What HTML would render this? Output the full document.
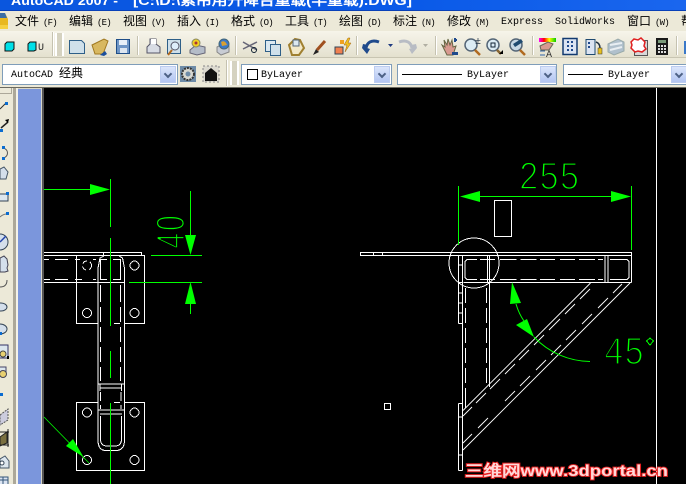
<!DOCTYPE html>
<html><head><meta charset="utf-8"><style>
html,body{margin:0;padding:0}
body{width:686px;height:484px;overflow:hidden;position:relative;background:#ece9d8;font-family:"Liberation Mono","WenQuanYi Zen Hei",monospace}
.a{position:absolute}
.m{position:absolute;top:13px;font:12px/16px "WenQuanYi Zen Hei","Noto Sans CJK SC",sans-serif;color:#000;white-space:nowrap}
.m i{font:normal 9px/16px "Liberation Mono",monospace;margin-left:4px;letter-spacing:-.8px}
.e{position:absolute;top:15px;font:10px/16px "Liberation Mono",monospace;white-space:nowrap}
.c{position:absolute;top:64px;height:19px;background:#fff;border:1px solid #7f9db9;box-sizing:content-box}
.b{position:absolute;top:66px;width:16px;height:17px;background:linear-gradient(#dbe5fb,#b2c5f2);border:1px solid #bcccf0;box-sizing:border-box}
.b:after{content:"";position:absolute;left:4px;top:4px;width:4px;height:4px;border-right:2px solid #4d6185;border-bottom:2px solid #4d6185;transform:rotate(45deg)}
.t{position:absolute;top:69px;font:10px/14px "Liberation Mono",monospace;color:#000;white-space:nowrap}
.g{position:absolute;width:1px;background:#c5c2b0;border-right:1px solid #fff}
.h{position:absolute;width:5px;border-left:2px solid #fff;border-right:2px solid #fff;background:#d5d2c0;box-sizing:content-box}
</style></head><body>
<div class="a" style="left:0;top:0;width:686px;height:10px;background:linear-gradient(90deg,#0a56de,#0a5ae8 60%,#1a66ee);border-bottom:1px solid #0840b8;overflow:hidden"></div>
<svg class="a" style="left:0;top:0" width="686" height="10" font-family="'Liberation Sans','WenQuanYi Zen Hei',sans-serif" font-weight="bold" font-size="13" fill="#fff">
<text x="11" y="5" textLength="107" lengthAdjust="spacingAndGlyphs">AutoCAD 2007 -</text>
<text x="133" y="5" textLength="279" lengthAdjust="spacingAndGlyphs">[C:\D:\索吊用升降台重载(半重载).DWG]</text>
</svg>
<div class="a" style="left:0;top:11px;width:686px;height:20px;background:#ece9d8"></div>
<div class="a" style="left:0;top:31px;width:686px;height:26px;background:linear-gradient(#f6f4ea,#e4e1cf)"></div>
<div class="a" style="left:0;top:57px;width:686px;height:1px;background:#c8c5b2"></div>
<div class="a" style="left:0;top:58px;width:686px;height:29px;background:#ece9d8"></div>

<svg class="a" style="left:0;top:11px" width="10" height="20"><path d="M0 2h5l3 6v10H0z" fill="#e8b820"/><path d="M0 2h5l2 5H0z" fill="#3a6ea5"/><path d="M0 14h8v4H0z" fill="#f5d040"/></svg>
<div class="m" style="left:15px">文件<i>(F)</i></div>
<div class="m" style="left:69px">编辑<i>(E)</i></div>
<div class="m" style="left:123px">视图<i>(V)</i></div>
<div class="m" style="left:177px">插入<i>(I)</i></div>
<div class="m" style="left:231px">格式<i>(O)</i></div>
<div class="m" style="left:285px">工具<i>(T)</i></div>
<div class="m" style="left:339px">绘图<i>(D)</i></div>
<div class="m" style="left:393px">标注<i>(N)</i></div>
<div class="m" style="left:447px">修改<i>(M)</i></div>
<div class="e" style="left:501px">Express</div>
<div class="e" style="left:555px">SolidWorks</div>
<div class="m" style="left:627px">窗口<i>(W)</i></div>
<div class="m" style="left:681px">帮</div>

<div class="g" style="left:52px;top:32px;height:24px"></div>
<div class="h" style="left:55px;top:33px;height:23px"></div>
<div class="g" style="left:137px;top:36px;height:19px"></div>
<div class="g" style="left:235px;top:36px;height:19px"></div>
<div class="g" style="left:356px;top:36px;height:19px"></div>
<div class="g" style="left:435px;top:36px;height:19px"></div>
<div class="g" style="left:532px;top:36px;height:19px"></div>
<div class="g" style="left:676px;top:36px;height:19px"></div>
<div class="g" style="left:226px;top:60px;height:26px"></div>
<div class="h" style="left:230px;top:61px;height:24px"></div>

<svg class="a" style="left:0;top:31px" width="686" height="27" stroke-width="1">
<defs><linearGradient id="r"><stop offset="0" stop-color="#f0f"/><stop offset=".3" stop-color="#f00"/><stop offset=".6" stop-color="#ff0"/><stop offset="1" stop-color="#0c0"/></linearGradient></defs>
<path d="M5 13l2-2h7v7l-2 2H5z" fill="#00e0e8" stroke="#111"/><path d="M28 13l2-2h6v8l-2 1h-6z" fill="#00e0e8" stroke="#111"/>
<text x="38" y="19" font-family="Liberation Mono" font-size="10" fill="#222">U</text>
<path d="M69.500 9.500h12l3 3v10h-15z" fill="#cfe0ea" stroke="#2e5f88"/>
<path d="M92 14l12-6 4 2-5 13H95z" fill="#d8b860" stroke="#a07820"/><path d="M100 24l5-4 2 3-3 2z" fill="#1c4f9c"/>
<rect x="116.500" y="8.500" width="13" height="14" fill="#6f96c6" stroke="#1f4e88"/><rect x="119" y="9" width="8" height="5" fill="#e8f0f8"/><rect x="120" y="17" width="7" height="5" fill="#dde6f0"/>
<path d="M147 16l3-3V8h6v5l4 3v6h-13z" fill="#d8dce4" stroke="#556"/><rect x="151" y="8" width="5" height="5" fill="#fff"/>
<rect x="167.500" y="8.500" width="13" height="14" fill="#cfe0ea" stroke="#2e5f88"/><circle cx="175" cy="15" r="4" fill="#dfeefa" stroke="#556"/><path d="M172 19l-4 5" stroke="#b06a20" stroke-width="2"/>
<path d="M190 19l6-5 9 2v6l-8 2-7-2z" fill="#b4bcc8" stroke="#667"/><circle cx="196" cy="12" r="4" fill="#f0d020" stroke="#886"/><circle cx="196" cy="12" r="1.500" fill="#a33"/>
<path d="M217 16l6-3 6 2v6l-8 3-4-3z" fill="#c8ccd4" stroke="#888"/><circle cx="224" cy="13" r="5" fill="#3a78c8" stroke="#467"/><path d="M221 11c3-2 5 0 6 3l-5 1z" fill="#d8a030"/>
<path d="M243 11l14 8M243 18l14-7" stroke="#667" stroke-width="1.500"/><circle cx="254" cy="19" r="2.500" fill="none" stroke="#123"/>
<rect x="265.500" y="9.500" width="10" height="11" fill="#dbe8f0" stroke="#2e5f88"/><rect x="270.500" y="13.500" width="10" height="11" fill="#cfe0ea" stroke="#2e5f88"/>
<path d="M289 14l6-6 5 1 4 8-5 7h-7z" fill="#f2e8c8" stroke="#a08030" stroke-width="2"/><rect x="293" y="9" width="6" height="6" fill="#dce8f0" stroke="#567"/>
<path d="M313 24l3-6 3 3z" fill="#222"/><path d="M317 19l8-9" stroke="#a05020" stroke-width="3"/>
<rect x="335" y="16" width="8" height="7" fill="#f08050" stroke="#345"/><rect x="340" y="9" width="4" height="4" fill="#f0a020"/><path d="M348 7l-4 7h3l-2 7 6-9h-3l2-5z" fill="#f0c020" stroke="#a06010" stroke-width=".5"/>
<path d="M379 11c-8-3-12 1-13 6" fill="none" stroke="#1f4a8c" stroke-width="3"/><path d="M363 13l5 1-1 3 3 1-3 5-5-6z" fill="#1f4a8c"/><path d="M388 13h5l-2.500 3z" fill="#1f3a80"/>
<path d="M399 11c8-3 12 1 13 6" fill="none" stroke="#b8bcc4" stroke-width="3"/><path d="M416 13l-5 1 1 3-3 1 3 5 5-6z" fill="#b8bcc4"/><path d="M423 13h5l-2.500 3z" fill="#b0aea2"/>
<path d="M442 14l3 2-1-7 3 5 1-6 2 6 2-5 1 7 3-1-3 9h-6z" fill="#d89a90" stroke="#664"/><path d="M454 9h3M455 7v4" stroke="#1f4a8c" stroke-width="2"/><path d="M452 21h6v3h-6z" fill="#1f4a8c"/>
<circle cx="471" cy="14" r="6" fill="#dcecf4" stroke="#567" stroke-width="1.500"/><path d="M475 19l5 5" stroke="#b06a20" stroke-width="2.500"/><text x="475" y="13" font-size="10" font-family="Liberation Mono" fill="#234">±</text>
<circle cx="493" cy="14" r="6" fill="#dcecf4" stroke="#567" stroke-width="1.500"/><rect x="491" y="12" width="4" height="4" fill="none" stroke="#123"/><path d="M497 19l4 4" stroke="#863" stroke-width="2.500"/><path d="M503 23v-4l-4 4z" fill="#000"/>
<circle cx="516" cy="14" r="6" fill="#c8d8e4" stroke="#567" stroke-width="1.500"/><path d="M513 13l8-5 2 3-8 5z" fill="#1f4a70"/><path d="M520 19l5 5" stroke="#b06a20" stroke-width="2.500"/>
<rect x="539" y="7" width="17" height="4" fill="url(#r)"/><path d="M540 15l8-4 5 2-4 6h-8z" fill="#d89a90" stroke="#665"/><text x="546" y="26" font-size="10" font-family="Liberation Mono" fill="#333">A</text><path d="M540 20h5M540 24h5" stroke="#36a"/>
<rect x="563" y="7.500" width="14" height="16" fill="#dbe4f2" stroke="#123a70" stroke-width="1.500"/><path d="M567 10h2v2h-2zM571 10h2v2h-2zM567 14h2v2h-2zM571 14h2v2h-2zM567 18h2v2h-2zM571 18h2v2h-2z" fill="#1f4a8c"/>
<rect x="586" y="8.500" width="9" height="15" fill="#dbe4f2" stroke="#1f4a70"/><path d="M588 11h2v2h-2zM588 15h2v2h-2z" fill="#1f4a8c"/><path d="M596 11c3 1 4 3 4 6" fill="none" stroke="#234" stroke-width="1.500"/><rect x="598" y="17" width="4" height="6" fill="#e8c020" stroke="#333" stroke-width=".5"/>
<path d="M608 13l10-5 6 3v9l-10 4-6-3z" fill="#b0c0cc" stroke="#9aa"/><path d="M610 14l12-2M610 19l12-3" stroke="#e8eef2" stroke-width="2"/>
<rect x="634.500" y="9.500" width="13" height="15" fill="#d8d8d8" stroke="#555"/><path d="M631 11l3-3 4 1 3-2 4 4-1 4 2 3-4 3-4-1-3 1-4-4 1-3z" fill="#fff" stroke="#e02020" stroke-width="1.500"/>
<rect x="656" y="7" width="12" height="17" fill="#1a1a1a"/><rect x="658" y="9" width="8" height="3" fill="#7a9a7a"/><path d="M658 14h2v2h-2zM661 14h2v2h-2zM664 14h2v2h-2zM658 17h2v2h-2zM661 17h2v2h-2zM664 17h2v2h-2zM658 20h2v2h-2zM661 20h2v2h-2zM664 20h2v2h-2z" fill="#ddd"/>
<rect x="684" y="10" width="2" height="13" fill="#3a78c8"/>
</svg>

<div class="c" style="left:2px;width:174px"></div>
<div class="b" style="left:160px"></div>
<div class="a" style="left:11px;top:65px;font:10px/17px 'Liberation Mono','WenQuanYi Zen Hei',monospace;white-space:nowrap">AutoCAD <span style="font:12px/17px 'WenQuanYi Zen Hei',sans-serif">经典</span></div>
<svg class="a" style="left:178px;top:62px" width="46" height="24">
<rect x="2" y="4" width="16" height="16" fill="#6e8ca8"/><circle cx="10" cy="12" r="6" fill="#d8d8d0" stroke="#333" stroke-dasharray="2 1" stroke-width="2"/><circle cx="10" cy="12" r="2.500" fill="#6e8ca8"/>
<rect x="25" y="4" width="16" height="16" fill="#dcdad0" stroke="#888" stroke-dasharray="2 2"/><path d="M27 11l6-5 6 5v8H27z" fill="#111"/>
</svg>
<div class="c" style="left:241px;width:149px"></div>
<div class="b" style="left:374px"></div>
<div class="a" style="left:247px;top:69px;width:9px;height:9px;border:1px solid #000;background:#fff"></div>
<div class="t" style="left:261px">ByLayer</div>
<div class="c" style="left:397px;width:158px"></div>
<div class="b" style="left:540px"></div>
<div class="a" style="left:402px;top:74px;width:60px;height:1px;background:#000"></div>
<div class="t" style="left:467px">ByLayer</div>
<div class="c" style="left:563px;width:130px"></div>
<div class="b" style="left:671px"></div>
<div class="a" style="left:568px;top:74px;width:35px;height:1px;background:#000"></div>
<div class="t" style="left:608px">ByLayer</div>

<div class="a" style="left:0;top:87px;width:686px;height:1px;background:#6b6a60"></div>
<div class="a" style="left:0;top:88px;width:44px;height:396px;background:#ece9d8"></div>
<div class="a" style="left:13px;top:88px;width:3px;height:396px;background:#aca899"></div>
<div class="a" style="left:16px;top:88px;width:2px;height:396px;background:#f4f2e8"></div>
<div class="a" style="left:18px;top:89px;width:23px;height:395px;background:#7b96dc"></div>
<div class="a" style="left:41px;top:88px;width:1px;height:396px;background:#d8d6c8"></div>
<div class="a" style="left:42px;top:88px;width:2px;height:396px;background:#555"></div>
<div class="a" style="left:18px;top:88px;width:23px;height:1px;background:#d8d6c8"></div>
<div class="a" style="left:0;top:88px;width:12px;height:6px;border-bottom:1px solid #aca899;border-right:1px solid #aca899;box-sizing:border-box"></div>

<svg class="a" style="left:0;top:88px" width="13" height="396">
<path d="M0 21l6-6" stroke="#333" fill="none"/><rect x="5" y="14" width="3" height="3" fill="#0a6cd0"/>
<path d="M1 40l7-6" stroke="#222" stroke-width="1.500"/><path d="M9 31l-4 1 3 3z" fill="#000"/><rect x="0" y="41" width="3" height="3" fill="#0a6cd0"/>
<path d="M3 60c6 1 6 9 0 10" fill="none" stroke="#555"/><rect x="2" y="58" width="3" height="3" fill="#0a6cd0"/><rect x="2" y="69" width="3" height="3" fill="#0a6cd0"/>
<path d="M0 81l4-2 4 5-2 7H0z" fill="#d4dfeb" stroke="#456"/>
<rect x="-1" y="106" width="9" height="7" fill="#dce6ee" stroke="#345"/><rect x="6" y="104" width="3" height="3" fill="#0a6cd0"/>
<path d="M0 129c2-2 4-3 7-3" fill="none" stroke="#777"/><rect x="6" y="124" width="3" height="3" fill="#0a6cd0"/>
<circle cx="0" cy="154" r="8" fill="#d4dfeb" stroke="#345"/><path d="M0 154l6-6" stroke="#24a" stroke-width="1.500"/>
<path d="M0 170l4-2 3 3 1 6-1 3 1 3-3 1H0z" fill="#d4dfeb" stroke="#445"/>
<path d="M0 199c4 0 7-2 7-7" fill="none" stroke="#555"/>
<ellipse cx="1" cy="219" rx="6" ry="4" fill="#d4dfeb" stroke="#345"/>
<ellipse cx="0" cy="241" rx="7" ry="5" fill="#d4dfeb" stroke="#345"/><rect x="0" y="244" width="2" height="3" fill="#0a6cd0"/>
<rect x="-1" y="257" width="9" height="13" fill="#dce6ee" stroke="#336"/><circle cx="3" cy="266" r="3" fill="#e8d070" stroke="#444"/><rect x="7" y="268" width="2" height="3" fill="#000"/>
<rect x="-1" y="279" width="7" height="7" fill="#dce6ee" stroke="#446"/><circle cx="3" cy="286" r="3.500" fill="#e8d070" stroke="#445"/>
<rect x="0" y="305" width="3" height="3" fill="#0a6cd0"/>
<path d="M0 327l8-6v11l-8 5z" fill="#ccd" stroke="#555" stroke-dasharray="2 1"/>
<path d="M0 349l7-5v11l-7 3z" fill="#7a7040" stroke="#222"/><path d="M0 344h9M8 341v18M0 357h9" stroke="#222"/>
<path d="M0 371l5-3 4 5v7H0z" fill="#dce6ee" stroke="#456"/><circle cx="2" cy="375" r="2" fill="#fff" stroke="#345"/>
<rect x="-1" y="389" width="9" height="8" fill="#dbe4f2" stroke="#357"/><path d="M0 392h8M3 389v8" stroke="#357"/>
</svg>

<div class="a" style="left:44px;top:88px;width:642px;height:396px;background:#000"></div>
<svg class="a" style="left:0;top:0" width="686" height="484" fill="none">
<g stroke="#fff" shape-rendering="crispEdges">
<path d="M656.500 88v396"/>
<!-- left assembly -->
<path d="M44 252.500H141.500V255.500M103.500 252.500V255.500M44 255.500H144.500V323.500H124.500M120 323.500H114M98 323.500H76.500V255.500M44 282.500H124.500"/>
<path d="M98 402.500H76.500V470.500H144.500V402.500H124.500M120 402.500H114"/>
<path d="M44 259.500H49M55 259.500H68M75 259.500H80M93 259.500H96M44 279.500H50M55 279.500H68M75 279.500H82M93 279.500H96"/>
<path d="M98 268V440M124.500 268V440"/>
<path d="M98 268L100 258L104 256M124.500 268L122.500 258L119 256"/>
<path d="M98 440Q98 450.500 106 450.500H116Q124.500 450.500 124.500 440"/>
<path d="M107 259.500H100.500V279.500H107M113 259.500H120.500V279.500H113"/>
<path d="M100.500 285V302M120.500 285V302M100.500 307V322M120.500 307V322M100.500 327V342M120.500 327V342M100.500 347V362M120.500 347V362M100.500 367V381M120.500 367V381"/>
<path d="M98 384H124.500M100 388H122M100 384V391M121.500 384V391"/>
<path d="M98 410H124.500M100 414H122"/>
<path d="M100.500 392V401M121 392V401M100.500 405V409M121 405V409M100.500 416V439Q100.500 446 107 446H115Q121.500 446 121.500 439V416"/>
<circle cx="87" cy="313" r="4.500"/><circle cx="134.500" cy="313" r="4.500"/>
<circle cx="87" cy="265.500" r="4.500" stroke-dasharray="5 3"/><circle cx="134.500" cy="265.500" r="4.500"/>
<circle cx="87" cy="412.500" r="4.500"/><circle cx="134.500" cy="412.500" r="4.500"/>
<circle cx="87" cy="460" r="4.500"/><circle cx="134.500" cy="460" r="4.500"/>
<!-- right assembly -->
<path d="M360.500 252.500H631.500V255.500H360.500ZM373.500 252.500V255.500M382.500 252.500V255.500"/>
<rect x="494.500" y="200.500" width="17" height="36"/>
<circle cx="474" cy="263" r="25"/>
<path d="M463.500 282.500H631.500M631.500 255.500V282.500"/>
<path d="M477 259.500H467L465 261.500V277.500L467 279.500H477M480 259.500H495M500 259.500H516.500M520.500 259.500H536.500M540 259.500H555M560 259.500H575M579 259.500H595M598 259.500H603M610 259.500H627L629 261.500V277.500L627 279.500H610M480 279.500H495M500 279.500H516.500M520.500 279.500H536.500M540 279.500H555M560 279.500H575M579 279.500H595M598 279.500H603"/>
<path d="M487.500 256V282M489.500 256V282M605 256V282M608 256V282"/>
<path d="M458.500 255.500V323.500M458.500 403.500V470.500M462.500 255.500V470.500M458.500 323.500H462.500M458.500 403.500H462.500M458.500 282.500H462.500M458.500 293H462.500M458.500 303H462.500M458.500 313H462.500M458.500 417H462.500M458.500 455H462.500M458.500 470.500H462.500M458.500 265H462.500"/>
<path d="M465.500 288V303M465.500 308V323M465.500 328V343M465.500 348V363M465.500 368V383M465.500 388V408"/>
<path d="M486.500 288V303M486.500 308V323M486.500 328V343M486.500 348V363M486.500 368V383"/>
<path d="M489.500 283V387"/>
<rect x="384.500" y="403.500" width="6" height="6"/>
</g>
<g stroke="#fff" stroke-width=".9">
<path d="M463 410.500L590.500 283M463 450L630 283"/>
<path d="M463 416L472 407M476 403L486 393M490 389L500 379M505 374L515 364M519 360L529 350M534 345L544 335M549 330L560 319M565 314L575 304M580 299L590 289"/>
<path d="M463 443L472 434M478 428L488 418M505 401L515 391M520 386L530 376M536 370L546 360M551 355L561 345M566 340L576 330M582 324L592 314M598 308L608 298M613 293L622 284"/>
</g>
<g stroke="#0f0" shape-rendering="crispEdges">
<path d="M44 189.500H92M110.500 179V227M110.500 238V326M110.500 351V378M110.500 403V484"/>
<path d="M190.500 191V240M151 255.500H202M129 282.500H202M190.500 300V314"/>
<path d="M458.500 186V245M631.500 186V250M478 196.500H612"/>
</g>
<g fill="#0f0">
<path d="M90 184L110 189.500L90 195Z"/>
<path d="M185 235H196L190.500 255Z"/>
<path d="M185 304H196L190.500 282Z"/>
<path d="M460 196.500L480 191V202Z"/>
<path d="M631 196.500L611 191V202Z"/>
<path d="M512 282L521 303L510 304Z"/>
<path d="M534 337L516 325L527 319Z"/>
<path d="M83.500 457L66 446L73 439Z"/>
</g>
<path d="M44 417L89 463" stroke="#0f0" stroke-width=".8"/>
<path d="M516 304Q519 314 524 321M534 337A78 78 0 0 0 590 361.500" stroke="#0f0"/>
<path d="M650 338L653.500 341L650 345L646.500 341Z" stroke="#0f0" shape-rendering="crispEdges"/>
<g font-size="40" fill="#0f0" stroke="#000" stroke-width="1.800" paint-order="fill stroke">
<text font-family="Liberation Mono" transform="translate(518.500 189) scale(.85 1)">255</text>
<text font-family="Liberation Mono" transform="translate(603.500 364) scale(.85 1)">45</text>
<text font-family="Liberation Sans" letter-spacing="3" transform="translate(184 248.500) rotate(-90) scale(.7 1)">40</text>
</g>
<text x="465" y="476" font-family="'Liberation Sans','WenQuanYi Zen Hei',sans-serif" font-weight="bold" font-size="15.500" fill="#ffd8d8" stroke="#e82020" stroke-width="1.800" paint-order="stroke" textLength="203" lengthAdjust="spacingAndGlyphs">三维网www.3dportal.cn</text>
</svg>
</body></html>
